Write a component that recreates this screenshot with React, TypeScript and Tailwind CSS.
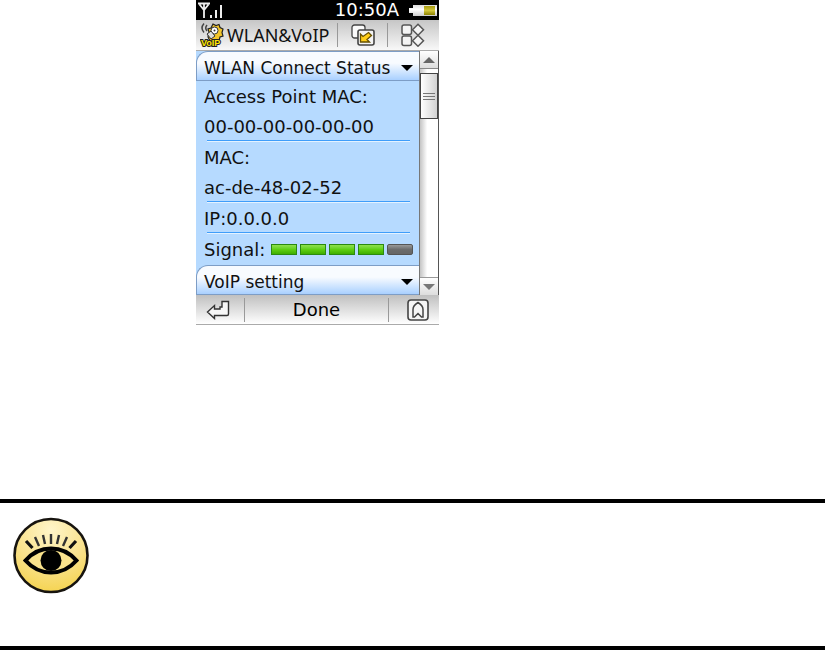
import { useState } from 'react';
import type { ReactNode } from 'react';

const SIGNAL_MAX = 5;

const networkRows = [
  ['Access Point MAC:', '00-00-00-00-00-00'],
  ['MAC:', 'ac-de-48-02-52'],
  ['IP:0.0.0.0'],
];

function AntennaIcon() {
  return (
    <svg width="26" height="16" viewBox="0 0 26 16" fill="none" stroke="#eee" aria-hidden="true">
      <path d="M0 1.5h12M1.5 2.5l4.500 5.500 4.500-5.500M6 2v14" strokeWidth="1.8" />
      <path d="M13 13v3M18 8v8M23 3v13" strokeWidth="2" />
    </svg>
  );
}

function BatteryIcon() {
  return (
    <svg width="28" height="11" viewBox="0 0 28 11" aria-hidden="true">
      <defs>
        <linearGradient id="battery" x2="0" y2="1">
          <stop offset="0" stopColor="#a89c10" />
          <stop offset=".5" stopColor="#d2c63c" />
          <stop offset="1" stopColor="#8d8200" />
        </linearGradient>
        <linearGradient id="batteryCase" x2="0" y2="1">
          <stop offset="0" stopColor="#ddd" />
          <stop offset=".4" stopColor="#fff" />
          <stop offset="1" stopColor="#ccc" />
        </linearGradient>
      </defs>
      <path d="M0 3h4V0h24v11H4V8H0z" fill="url(#batteryCase)" />
      <path d="M15 1h11v9H15z" fill="url(#battery)" />
    </svg>
  );
}

function VoipIcon() {
  return (
    <svg width="24" height="24" viewBox="0 0 24 24" aria-hidden="true">
      <path d="M4 .5q-4 4.500 0 9M7 2q-2.500 3 0 6" fill="none" stroke="#444" strokeWidth="1.5" />
      <path d="M13 1l3 1.500L19 1.500l1 3 3 1.500-1 3.500 1 3.500-3 1-1 4h-9l-2-4 1-5-1-3 3-1z" fill="#f2c52b" stroke="#222" strokeWidth="1.2" />
      <circle cx="14.500" cy="7.500" r="3.500" fill="#fff" stroke="#333" />
      <circle cx="14.500" cy="7.500" r="1" fill="#333" />
      <path d="M7 11l4-3 4 5-4 3z" fill="#ddd" stroke="#333" />
      <text x="1" y="23" fontSize="9" fontWeight="700" fontFamily="Liberation Sans, sans-serif" fill="#ffe600" stroke="#222" strokeWidth="2" paintOrder="stroke">VoIP</text>
    </svg>
  );
}

function SwitchIcon() {
  return (
    <svg width="24" height="22" viewBox="0 0 24 22" stroke="#444" strokeWidth="1.3" aria-hidden="true">
      <rect x="1" y="1" width="13" height="13" rx="2.500" fill="#fafafa" />
      <rect x="7" y="6" width="16" height="15" rx="2" fill="#f4f4f4" strokeWidth="1.6" />
      <path d="M17.500 8.500l3 3-4.500 4 2.500 2.500H9.500V10l2.500 2.500z" fill="#ffce18" stroke="#665000" />
    </svg>
  );
}

function AppsIcon() {
  return (
    <svg width="24" height="24" viewBox="0 0 24 24" fill="#f4f4f4" stroke="#555" strokeWidth="1.5" aria-hidden="true">
      <rect x="1" y="2" width="9.500" height="9.500" rx="2" />
      <rect x="1" y="13" width="9.500" height="9.500" rx="2" />
      <path d="M17 1.200l5.500 5.500-5.500 5.500-5.500-5.500zM17 12.200l5.500 5.500-5.500 5.500-5.500-5.500z" />
    </svg>
  );
}

function BackIcon() {
  return (
    <svg width="24" height="20" viewBox="0 0 24 20" aria-hidden="true">
      <path d="M1.500 12L8.500 5.500V9H14V7h2V1.500h6.500V14q0 1.500-1.500 1.500H8.500V18.500z" fill="#f7f7f7" stroke="#333" strokeWidth="1.4" />
    </svg>
  );
}

function HomeIcon() {
  return (
    <svg width="22" height="22" viewBox="0 0 22 22" fill="#f5f5f5" stroke="#444" aria-hidden="true">
      <rect x="1" y="1" width="20" height="20" rx="3" strokeWidth="1.600" />
      <path d="M11 3.500q5 3 5 7V18h-1.500L11 14.500 7.500 18H6V10.500q0-4 5-7z" strokeWidth="1.500" />
    </svg>
  );
}

function EyeIcon() {
  return (
    <svg width="78" height="78" viewBox="0 0 78 78" role="img" aria-label="Note">
      <defs>
        <radialGradient id="eye" cx=".5" cy=".15" r=".85">
          <stop offset="0" stopColor="#fff5c9" />
          <stop offset=".6" stopColor="#f9e18a" />
          <stop offset="1" stopColor="#f5d452" />
        </radialGradient>
      </defs>
      <circle cx="39" cy="38.500" r="36.500" fill="url(#eye)" stroke="#17140f" strokeWidth="2.600" />
      <path d="M14 24l6.500 7M64 24l-6.500 7" stroke="#111" strokeWidth="3.200" />
      <path d="M23 20l4 9M31 18l2 9M39 17v10M47 18l-2 9M55 20l-4 9" stroke="#333" strokeWidth="2.400" />
      <path d="M13.500 43.500Q24 31.500 39 31.500t25.500 12Q54 55.500 39 55.500t-25.500-12z" fill="#f9e28c" stroke="#000" strokeWidth="4" />
      <circle cx="39" cy="43.500" r="10.500" />
    </svg>
  );
}

function Triangle({ up = false, className }: { up?: boolean; className: string }) {
  return (
    <svg width="12" height="6" viewBox="0 0 12 6" fill="currentColor" className={className} aria-hidden="true">
      <path d={up ? 'M0 6L6 0l6 6z' : 'M0 0h12L6 6z'} />
    </svg>
  );
}

function SectionHeader({ children, open, onClick }: { children: ReactNode; open: boolean; onClick: () => void }) {
  return (
    <button
      type="button"
      aria-expanded={open}
      onClick={onClick}
      className="flex h-[30px] w-full items-center justify-between rounded-tl-xl border-b border-l border-t border-[#7d9dc6] bg-linear-to-b from-[#f8fbff] from-40% to-[#a9d0ff] pl-[7px] pr-1.5 pt-1 text-left text-[17px] leading-6"
    >
      {children}
      <Triangle className="text-black" />
    </button>
  );
}

function SignalMeter({ level }: { level: number }) {
  return (
    <span className="flex gap-[3px]" role="img" aria-label={`${level} of ${SIGNAL_MAX}`}>
      {Array.from({ length: SIGNAL_MAX }, (_, i) => (
        <span
          key={i}
          className={i < level
            ? 'h-[11px] w-[26px] border border-[#2b8a10] bg-linear-to-b from-[#8ee04c] via-[#5fcf12] to-[#3fae00]'
            : 'h-[11px] w-[26px] rounded-xs border border-[#555] bg-linear-to-b from-[#999] via-[#6c6c6c] to-[#666]'}
        />
      ))}
    </span>
  );
}

function Separator() {
  return <span className="h-6 w-px shrink-0 bg-[#999]" />;
}

function Scrollbar() {
  return (
    <div className="flex w-5 flex-col border-l border-r border-l-[#777] border-r-[#555] bg-linear-to-r from-[#c4c4c4] to-white to-40%">
      <button type="button" aria-label="Scroll up" className="flex h-[18px] items-center justify-center border-b border-[#888] bg-linear-to-b from-white to-[#ddd]">
        <Triangle up className="text-[#666]" />
      </button>
      <div className="mt-1 flex h-[46px] flex-col items-center justify-center gap-0.5 border border-[#444] bg-linear-to-r from-white to-[#d2d2d2]">
        <span className="h-px w-3 bg-[#777]" />
        <span className="h-px w-3 bg-[#777]" />
        <span className="h-px w-3 bg-[#777]" />
      </div>
      <button type="button" aria-label="Scroll down" className="mt-auto flex h-[18px] items-center justify-center border-t border-[#999] bg-linear-to-b from-white to-[#ddd]">
        <Triangle className="text-[#777]" />
      </button>
    </div>
  );
}

function Phone() {
  const [open, setOpen] = useState(true);

  return (
    <div className="w-[243px] font-['DejaVu_Sans',sans-serif] text-lg leading-6 text-[#111]">
      {/* status bar */}
      <div className="flex h-5 items-center bg-black px-0.5 text-white">
        <AntennaIcon />
        <span className="ml-auto mr-2.5 leading-5">10:50A</span>
        <BatteryIcon />
      </div>

      {/* title bar */}
      <div className="flex h-[31px] items-center border-b border-[#aaa] bg-linear-to-b from-[#c6c6c6] to-[#f8f8f8] pl-1">
        <VoipIcon />
        <h1 className="ml-[3px] w-[100px] font-['Noto_Sans',sans-serif]">WLAN&amp;VoIP</h1>
        <div className="flex flex-1 items-center justify-between pl-2.5 pr-3.5">
          <Separator />
          <button type="button" aria-label="Switch"><SwitchIcon /></button>
          <Separator />
          <button type="button" aria-label="Applications"><AppsIcon /></button>
        </div>
      </div>

      <div className="flex">
        <div className="flex-1 bg-[#b6daff]">
          <SectionHeader open={open} onClick={() => setOpen(o => !o)}>WLAN Connect Status</SectionHeader>
          {open && (
            <div className="pl-2">
              {networkRows.map(lines => (
                <div key={lines[0]}>
                  <div className="flex flex-col gap-1.5 pb-px pt-1">
                    {lines.map(line => <p key={line}>{line}</p>)}
                  </div>
                  <div className="ml-[3px] mr-[9px] h-0.5 bg-linear-to-b from-[#3f9dfa] from-50% to-[#e4f2ff] to-50%" />
                </div>
              ))}
              <div className="flex h-[31px] items-center gap-1.5">
                <span>Signal:</span>
                <SignalMeter level={4} />
              </div>
            </div>
          )}
          <SectionHeader open={false} onClick={() => setOpen(o => !o)}>VoIP setting</SectionHeader>
        </div>
        <Scrollbar />
      </div>

      {/* soft keys */}
      <div className="flex h-[30px] items-center justify-between border-b border-[#aaa] bg-linear-to-b from-[#c0c0c0] to-white px-2.5">
        <button type="button" aria-label="Back" className="mr-3.5"><BackIcon /></button>
        <Separator />
        <button type="button" className="flex-1 text-black">Done</button>
        <Separator />
        <button type="button" aria-label="Home" className="ml-4.5"><HomeIcon /></button>
      </div>
    </div>
  );
}

export default function App() {
  return (
    <main className="flex min-h-screen flex-col justify-between bg-white">
      <div className="pl-[196px]">
        <Phone />
      </div>
      <section className="h-[151px] border-b-4 border-t-4 border-black pl-3 pt-[14px]">
        <EyeIcon />
      </section>
    </main>
  );
}
